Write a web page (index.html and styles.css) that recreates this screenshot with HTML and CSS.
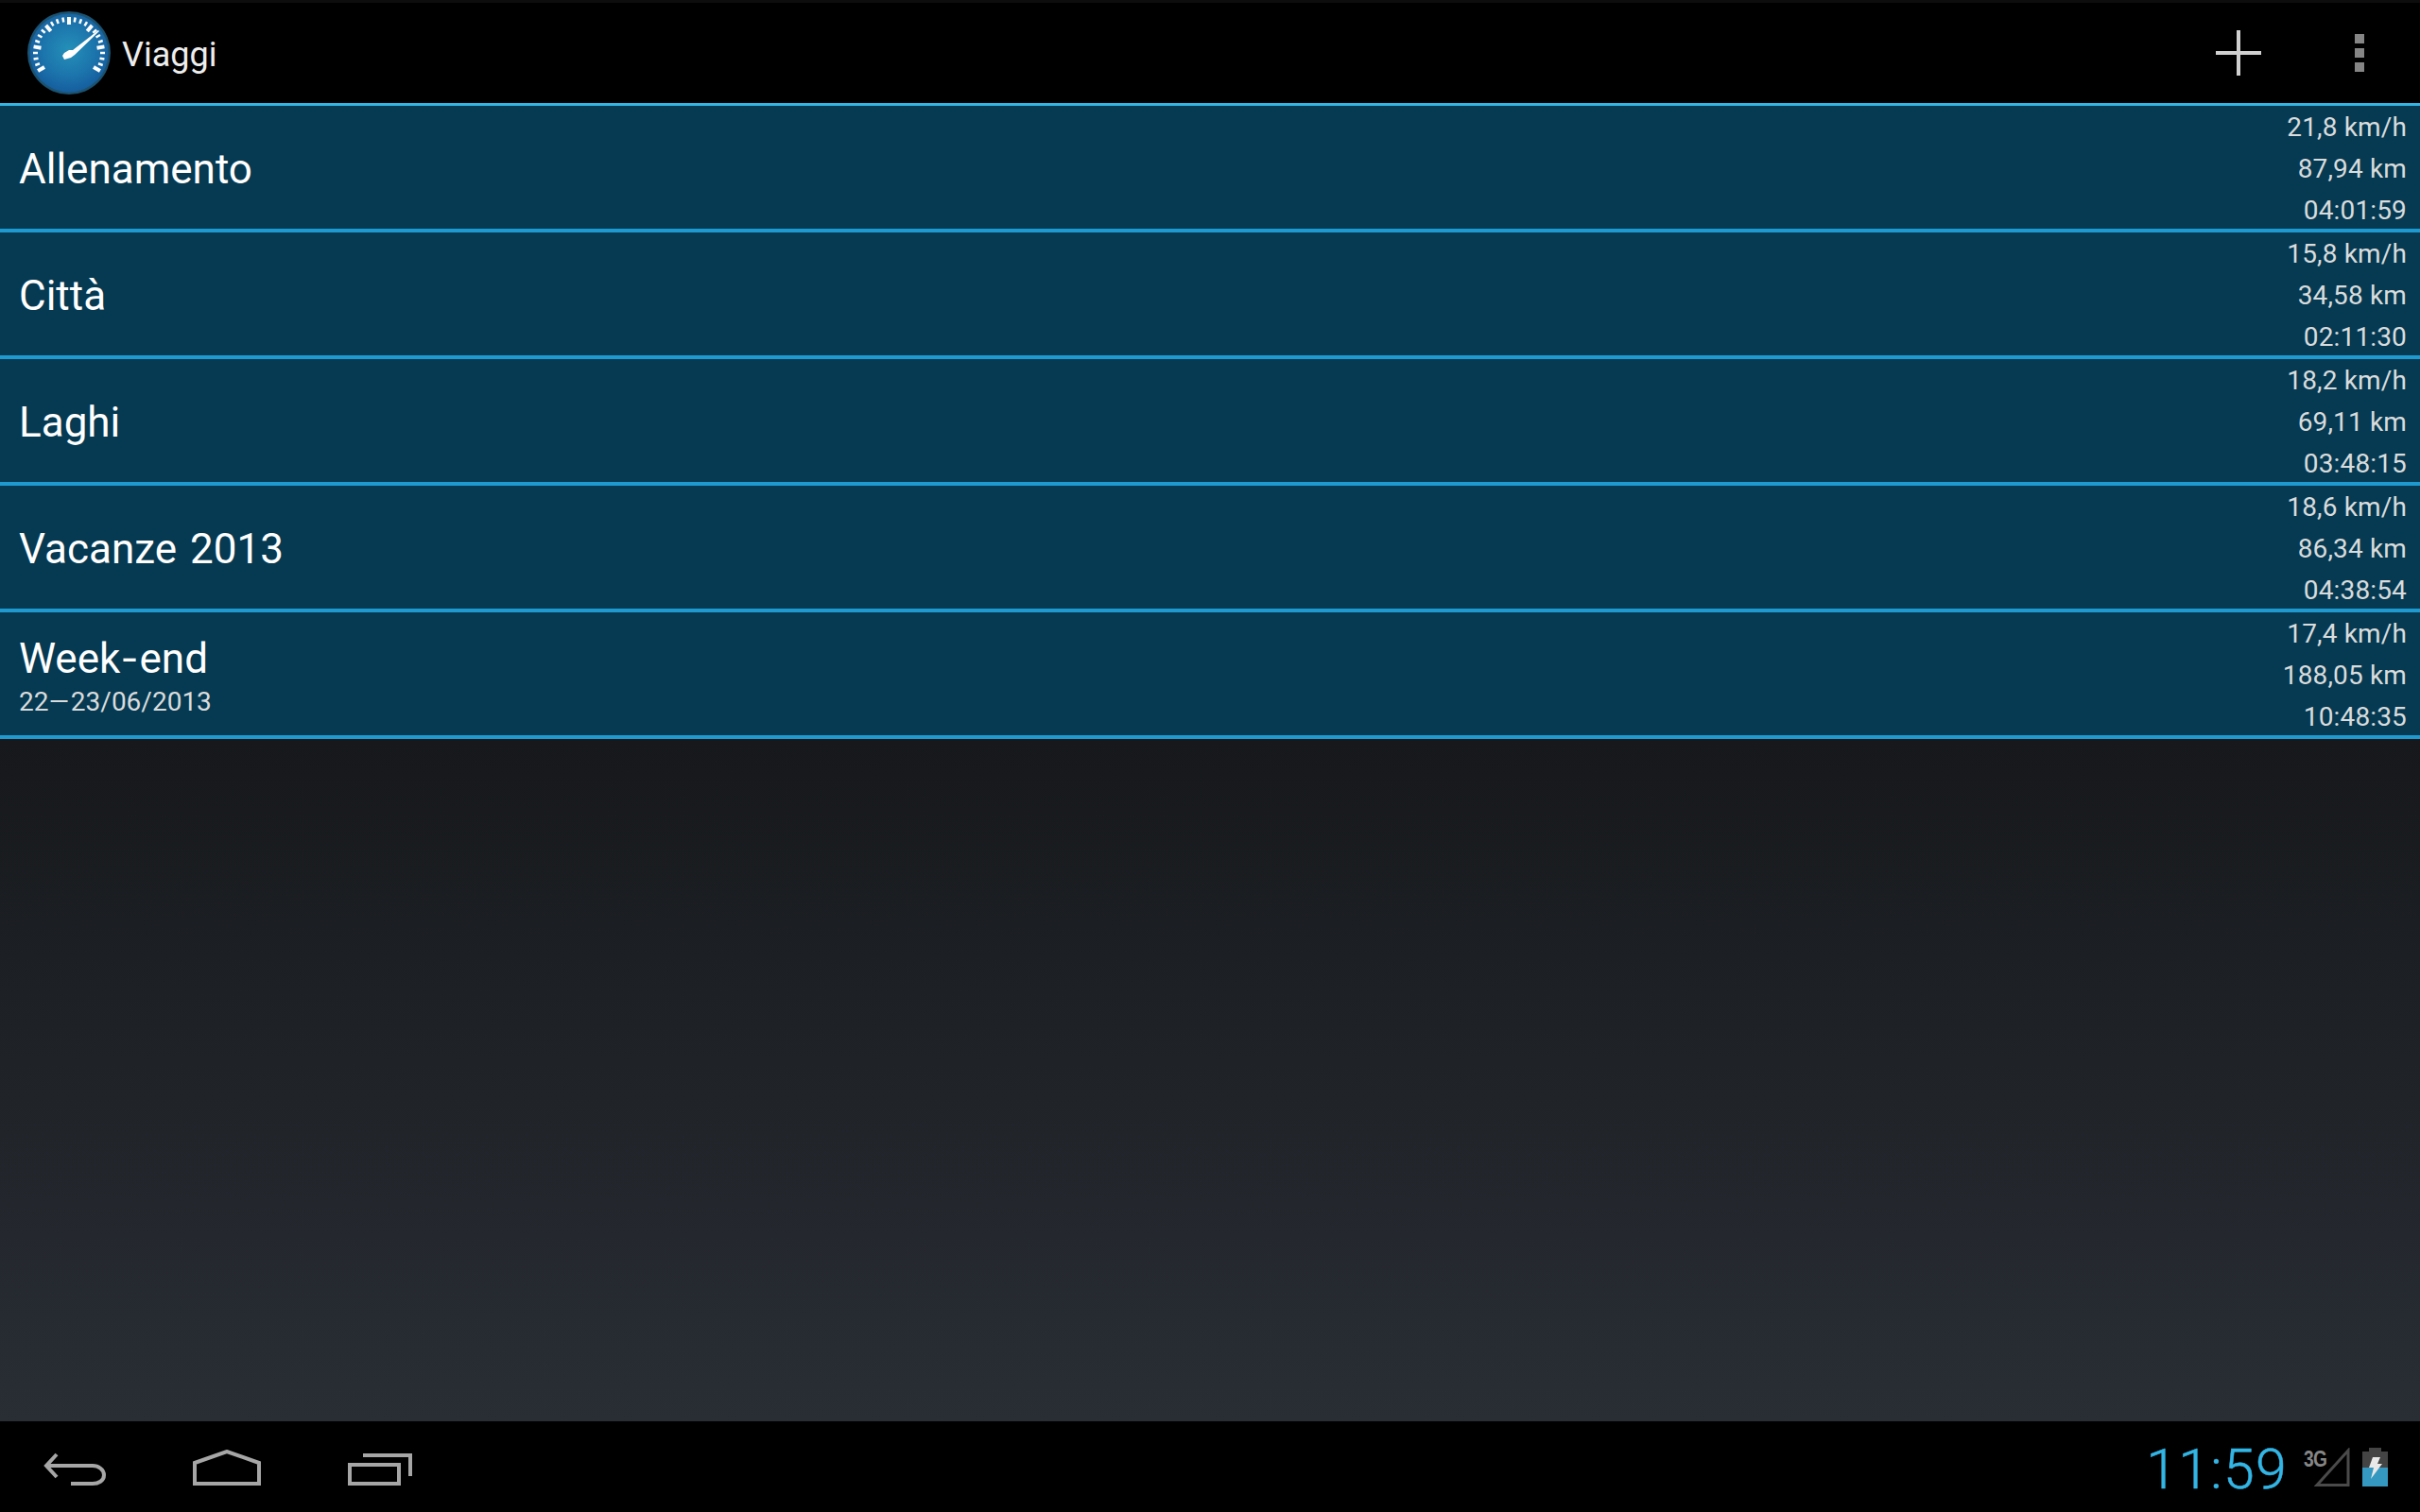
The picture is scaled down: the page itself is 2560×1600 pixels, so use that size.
FILE: index.html
```html
<!DOCTYPE html>
<html lang="it">
<head>
<meta charset="utf-8">
<title>Viaggi</title>
<link rel="stylesheet" href="styles.css">
</head>
<body>
<div class="screen">
  <header class="actionbar">
    <svg class="logo" width="90" height="90" viewBox="0 0 90 90">
      <defs>
        <radialGradient id="dial" cx="50%" cy="46%" r="52%">
          <stop offset="0" stop-color="#2490b8"/>
          <stop offset="0.65" stop-color="#1c74ac"/>
          <stop offset="1" stop-color="#1660a0"/>
        </radialGradient>
      </defs>
      <circle cx="45" cy="45" r="44" fill="#1b5270"/>
      <circle cx="45" cy="45" r="41.500" fill="url(#dial)"/>
      <g stroke="#fff" stroke-width="2.500">
        <line x1="45" y1="7" x2="45" y2="15" stroke-width="4" transform="rotate(-120 45 45)"/>
        <line x1="45" y1="7" x2="45" y2="12" transform="rotate(-110 45 45)"/>
        <line x1="45" y1="7" x2="45" y2="12" transform="rotate(-100 45 45)"/>
        <line x1="45" y1="7" x2="45" y2="12" transform="rotate(-90 45 45)"/>
        <line x1="45" y1="7" x2="45" y2="15" stroke-width="4" transform="rotate(-80 45 45)"/>
        <line x1="45" y1="7" x2="45" y2="12" transform="rotate(-70 45 45)"/>
        <line x1="45" y1="7" x2="45" y2="12" transform="rotate(-60 45 45)"/>
        <line x1="45" y1="7" x2="45" y2="12" transform="rotate(-50 45 45)"/>
        <line x1="45" y1="7" x2="45" y2="15" stroke-width="4" transform="rotate(-40 45 45)"/>
        <line x1="45" y1="7" x2="45" y2="12" transform="rotate(-30 45 45)"/>
        <line x1="45" y1="7" x2="45" y2="12" transform="rotate(-20 45 45)"/>
        <line x1="45" y1="7" x2="45" y2="12" transform="rotate(-10 45 45)"/>
        <line x1="45" y1="7" x2="45" y2="15" stroke-width="4"/>
        <line x1="45" y1="7" x2="45" y2="12" transform="rotate(10 45 45)"/>
        <line x1="45" y1="7" x2="45" y2="12" transform="rotate(20 45 45)"/>
        <line x1="45" y1="7" x2="45" y2="12" transform="rotate(30 45 45)"/>
        <line x1="45" y1="7" x2="45" y2="15" stroke-width="4" transform="rotate(40 45 45)"/>
        <line x1="45" y1="7" x2="45" y2="12" transform="rotate(50 45 45)"/>
        <line x1="45" y1="7" x2="45" y2="12" transform="rotate(60 45 45)"/>
        <line x1="45" y1="7" x2="45" y2="12" transform="rotate(70 45 45)"/>
        <line x1="45" y1="7" x2="45" y2="15" stroke-width="4" transform="rotate(80 45 45)"/>
        <line x1="45" y1="7" x2="45" y2="12" transform="rotate(90 45 45)"/>
        <line x1="45" y1="7" x2="45" y2="12" transform="rotate(100 45 45)"/>
        <line x1="45" y1="7" x2="45" y2="12" transform="rotate(110 45 45)"/>
        <line x1="45" y1="7" x2="45" y2="15" stroke-width="4" transform="rotate(120 45 45)"/>
      </g>
      <path d="M38 48 40 45 45 42 49 42 76 21 77 22 51 47 47 50 40 52Z" fill="#fff"/>
    </svg>
    <div class="app-title">Viaggi</div>
    <svg class="plus" width="48" height="48" viewBox="0 0 48 48">
      <path d="M24 0V48M0 24H48" stroke="#d0d0d0" stroke-width="4"/>
    </svg>
    <div class="overflow"><span></span><span></span><span></span></div>
  </header>

  <main class="list">
    <div class="row">
      <div class="name-block"><div class="name">Allenamento</div></div>
      <div class="stats"><div>21,8 km/h</div><div>87,94 km</div><div>04:01:59</div></div>
    </div>
    <div class="row">
      <div class="name-block"><div class="name">Città</div></div>
      <div class="stats"><div>15,8 km/h</div><div>34,58 km</div><div>02:11:30</div></div>
    </div>
    <div class="row">
      <div class="name-block"><div class="name">Laghi</div></div>
      <div class="stats"><div>18,2 km/h</div><div>69,11 km</div><div>03:48:15</div></div>
    </div>
    <div class="row">
      <div class="name-block"><div class="name">Vacanze 2013</div></div>
      <div class="stats"><div>18,6 km/h</div><div>86,34 km</div><div>04:38:54</div></div>
    </div>
    <div class="row">
      <div class="name-block"><div class="name tight">Week<span class="hyphen">-</span>end</div><div class="dates">22<span class="dash">–</span>23/06/2013</div></div>
      <div class="stats"><div>17,4 km/h</div><div>188,05 km</div><div>10:48:35</div></div>
    </div>
  </main>

  <div class="filler"></div>

  <footer class="navbar">
    <div class="nav-buttons">
      <svg class="nav-back" width="68" height="36" viewBox="0 0 68 36">
        <path d="M14 2 3 14 14 26M3 14H52C58 14 64 18 64 24 64 30 58 33 52 33H29" fill="none" stroke="#a6a6a6" stroke-width="4"/>
      </svg>
      <svg class="nav-home" width="72" height="38" viewBox="0 0 72 38">
        <path d="M2 14 36 2 70 14V36H2Z" fill="none" stroke="#a6a6a6" stroke-width="4"/>
      </svg>
      <svg class="nav-recent" width="68" height="34" viewBox="0 0 68 34">
        <path d="M2 12H54V32H2ZM16 2H66V24" fill="none" stroke="#a6a6a6" stroke-width="4"/>
      </svg>
    </div>
    <div class="status">
      <div class="clock">11:59</div>
      <div class="signal">
        <span class="net">3G</span>
        <svg class="triangle" width="38" height="42" viewBox="0 0 38 42">
          <path d="M3 39.500 36 3V39.500Z" fill="none" stroke="#4a4a4a" stroke-width="3"/>
        </svg>
      </div>
      <svg class="battery" width="27" height="41" viewBox="0 0 27 41">
        <path d="M7 0H20V4H27V21H0V4H7Z" fill="#444"/>
        <rect y="21" width="27" height="20" fill="#3498c0"/>
        <path d="M11 10H19L16 17H21L9 33 12 21H7Z" fill="#e8e8e8"/>
      </svg>
    </div>
  </footer>
</div>
</body>
</html>
```

FILE: styles.css
```css
* { box-sizing: border-box; }
html, body { margin: 0; padding: 0; background: #000; }
body { font-family: Roboto, "Noto Sans", sans-serif; }

.screen {
  width: 2560px;
  height: 1600px;
  display: flex;
  flex-direction: column;
  overflow: hidden;
}

.actionbar {
  height: 112px;
  flex: none;
  display: flex;
  align-items: center;
  background: #000;
  border-top: 3px solid #0d0d0d;
  border-bottom: 3px solid #33b5e5;
  padding: 0 0 0 28px;
}
.logo { flex: none; }
.app-title {
  margin: 4px 0 0 11px;
  font-size: 36px;
  color: #ededed;
  flex: 1;
}
.plus { margin-right: 99px; flex: none; }
.overflow {
  display: flex;
  flex-direction: column;
  gap: 5px;
  margin-right: 59px;
}
.overflow span { display: block; width: 10px; height: 10px; background: #858585; }

.list { flex: none; }
.row {
  height: 134px;
  display: flex;
  align-items: center;
  justify-content: space-between;
  background: #063a52;
  border-bottom: 4px solid #1f9ad0;
  padding: 4px 14px 0 20px;
}
.name { font-size: 44px; line-height: 52px; color: #fff; word-spacing: 3px; }
.name.tight { line-height: 50px; margin-top: 3px; }
.hyphen { display: inline-block; padding: 0 4px; transform: scaleX(1.25); }
.dates { font-size: 28px; line-height: 36px; color: #d9dcdd; margin-top: 3px; }
.dash { display: inline-block; padding: 0 2.500px; transform: scaleX(1.3); }
.stats {
  height: 130px;
  display: flex;
  flex-direction: column;
  justify-content: center;
  align-items: flex-end;
  font-size: 28px;
  line-height: 44px;
  letter-spacing: 0.15px;
  color: #d9dcdd;
}

.filler {
  flex: 1;
  background: linear-gradient(#16181b, #292e35);
}

.navbar {
  height: 96px;
  flex: none;
  display: flex;
  justify-content: space-between;
  background: #000;
}
.nav-buttons { display: flex; align-items: flex-start; padding: 32px 0 0 46px; }
.nav-back { margin-top: 1px; flex: none; }
.nav-home { margin-left: 90px; margin-top: -2px; flex: none; }
.nav-recent { margin-left: 92px; margin-top: 2px; flex: none; }

.status { display: flex; align-items: flex-start; padding: 0 34px 0 0; }
.clock {
  font-size: 59px;
  font-weight: 300;
  line-height: 96px;
  margin-top: 3px;
  color: #33b5e5;
  letter-spacing: 1.300px;
  -webkit-text-stroke: 0.5px #33b5e5;
}
.signal { display: flex; align-items: flex-start; margin: 28px 0 0 17px; }
.net {
  display: block;
  font-family: "Liberation Sans", sans-serif;
  font-size: 24px;
  line-height: 24px;
  font-weight: 700;
  color: #868686;
  letter-spacing: -1px;
  transform: scaleX(0.8);
  transform-origin: left top;
}
.triangle { margin-left: -19px; flex: none; }
.battery { margin: 28px 0 0 13px; flex: none; }
```
